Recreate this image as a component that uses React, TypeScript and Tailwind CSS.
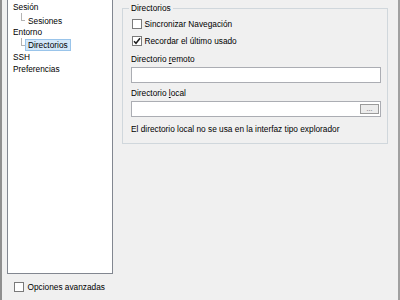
import React from "react";

function Check({ checked }: { checked?: boolean }) {
  return (
    <span className="flex h-[10px] w-[10px] shrink-0 items-center justify-center border border-[#7a7a7a] bg-white">
      {checked && (
        <svg width="8" height="8" viewBox="0 0 8 8">
          <path d="M1 4.2 L3 6.3 L7 1.3" fill="none" stroke="#1e1e1e" strokeWidth="1.5" />
        </svg>
      )}
    </span>
  );
}

function TreeRow({ label, child, last, selected }: { label: string; child?: boolean; last?: boolean; selected?: boolean }) {
  if (!child) {
    return (
      <div className="flex h-[12.4px] items-center pl-[5px]">
        <span className="leading-none">{label}</span>
      </div>
    );
  }
  return (
    <div className="flex h-[12.4px] items-center pl-[13px]">
      <span className="mt-[-5px] h-[7.5px] w-[4px] shrink-0 self-center border-b border-l border-[#b4b4b4]" />
      <span
        className={
          "flex h-[12px] items-center border px-[2px] leading-none mt-[2px] " +
          (selected ? "border-[#99c4ea] bg-[#d3e7f8]" : "border-transparent")
        }
      >
        {label}
      </span>
    </div>
  );
}

export default function App() {
  return (
    <div
      className="flex h-[300px] w-[400px] overflow-hidden bg-[#f0f0f0] text-[8.3px] text-black"
      style={{ fontFamily: '"Liberation Sans", Arial, sans-serif' }}
    >
      <div className="w-[2px] shrink-0 bg-[#8f8f8f]" />
      <div className="flex w-[111px] shrink-0 flex-col pl-[5px]">
        <div className="mt-[-1px] h-[275px] w-[106px] border border-[#828790] bg-white pt-[1.1px]">
          <TreeRow label="Sesión" />
          <TreeRow label="Sesiones" child />
          <TreeRow label="Entorno" />
          <TreeRow label="Directorios" child selected />
          <TreeRow label="SSH" />
          <TreeRow label="Preferencias" />
        </div>
        <div className="mt-[8px] flex h-[10px] items-center gap-[3.5px] pl-[7px]">
          <Check />
          <span className="leading-none">Opciones avanzadas</span>
        </div>
      </div>
      <div className="flex flex-1 flex-col pl-[9px] pt-[3px]">
        <fieldset className="w-[266px] border border-[#d0d7dc] pb-[9px] pl-[8px] pr-[6px]">
          <legend className="ml-[-2px] h-[10px] px-[2px] leading-[10px]">Directorios</legend>
          <div className="ml-[1px] mt-[6px] flex h-[10px] items-center gap-[2.5px]">
            <Check />
            <span className="leading-none">Sincronizar Navegación</span>
          </div>
          <div className="ml-[1px] mt-[7px] flex h-[10px] items-center gap-[2.5px]">
            <Check checked />
            <span className="leading-none">Recordar el último usado</span>
          </div>
          <div className="mt-[8px] flex h-[10px] items-center">
            <span className="leading-none">
              Directorio <span className="underline underline-offset-1">r</span>emoto
            </span>
          </div>
          <div className="mt-[3px] h-[16px] w-[250px] border border-[#abadb3] bg-white" />
          <div className="mt-[5px] flex h-[10px] items-center">
            <span className="leading-none">
              Directorio <span className="underline underline-offset-1">l</span>ocal
            </span>
          </div>
          <div className="mt-[3px] flex h-[16px] w-[250px] items-center justify-end border border-[#abadb3] bg-white pr-[1px]">
            <div className="flex h-[10px] w-[19px] items-end justify-center border border-[#9a9a9a] bg-[#ececec] pb-[1px] text-[7px] leading-none text-[#555]">
              ...
            </div>
          </div>
          <div className="mt-[7px] flex h-[10px] items-center">
            <span className="leading-none">El directorio local no se usa en la interfaz tipo explorador</span>
          </div>
        </fieldset>
      </div>
      <div className="w-[2px] shrink-0 bg-[#a0a0a0]" />
    </div>
  );
}
